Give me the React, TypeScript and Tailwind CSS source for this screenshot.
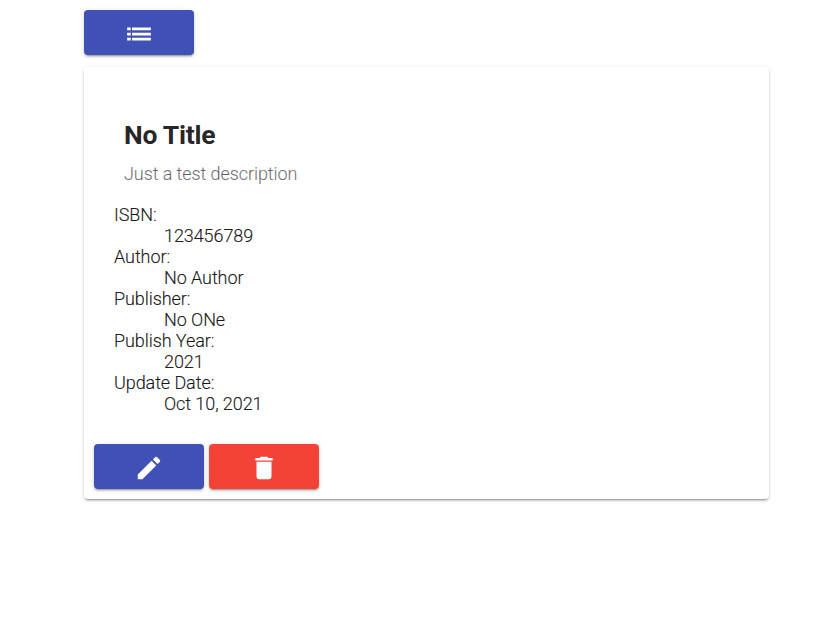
import React from "react";

const raised =
  "flex h-[45px] w-[110px] items-center justify-center rounded-[4px] text-white shadow-[0_3px_1px_-2px_rgba(0,0,0,0.2),0_2px_2px_0_rgba(0,0,0,0.14),0_1px_5px_0_rgba(0,0,0,0.12)]";

function Icon({ d }: { d: string }) {
  return (
    <svg viewBox="0 0 24 24" className="mt-[3px] size-[30px] fill-current">
      <path d={d} />
    </svg>
  );
}

const details = [
  ["ISBN:", "123456789"],
  ["Author:", "No Author"],
  ["Publisher:", "No ONe"],
  ["Publish Year:", "2021"],
  ["Update Date:", "Oct 10, 2021"],
];

export default function App() {
  return (
    <main className="min-h-[622px] bg-white pt-[10px] pl-[84px] font-[Roboto,sans-serif] text-black/87">
      <button className={`${raised} bg-[#3f51b5]`} aria-label="List">
        <Icon d="M2.5 6.8h2.9v2.2H2.5zM6.4 6.8h15.1v2.2H6.4zM2.5 10.9h2.9v2.2H2.5zM6.4 10.9h15.1v2.2H6.4zM2.5 15h2.9v2.2H2.5zM6.4 15h15.1v2.2H6.4z" />
      </button>
      <section className="mt-3 h-[432px] w-[685px] rounded-[4px] bg-white px-[10px] pt-[51px] shadow-[0_3px_1px_-2px_rgba(0,0,0,0.2),0_2px_2px_0_rgba(0,0,0,0.14),0_1px_5px_0_rgba(0,0,0,0.12)]">
        <h2 className="ml-[30px] text-[26.5px] leading-[34px] font-bold tracking-[-0.23px]">No Title</h2>
        <p className="mt-[11px] ml-[30px] text-[18px] leading-[21px] font-light tracking-[-0.08px] text-black/50 [-webkit-text-stroke:0.2px_currentColor]">Just a test description</p>
        <dl className="mt-5 ml-5 text-[18px] leading-[21px] font-light tracking-[-0.08px] [-webkit-text-stroke:0.2px_currentColor]">
          {details.map(([term, value]) => (
            <React.Fragment key={term}>
              <dt>{term}</dt>
              <dd className="ml-[50px]">{value}</dd>
            </React.Fragment>
          ))}
        </dl>
        <div className="mt-[30px] flex gap-[5px]">
          <button className={`${raised} bg-[#3f51b5]`} aria-label="Edit">
            <Icon d="M3 17.25V21h3.75L17.81 9.94l-3.75-3.75L3 17.25zM20.71 7.04a.996.996 0 0 0 0-1.41l-2.34-2.34a.996.996 0 0 0-1.41 0l-1.83 1.83 3.75 3.75 1.83-1.83z" />
          </button>
          <button className={`${raised} bg-[#f44336]`} aria-label="Delete">
            <Icon d="M6 19c0 1.1.9 2 2 2h8c1.1 0 2-.9 2-2V7H6v12zM19 4h-3.5l-1-1h-5l-1 1H5v2h14V4z" />
          </button>
        </div>
      </section>
    </main>
  );
}
